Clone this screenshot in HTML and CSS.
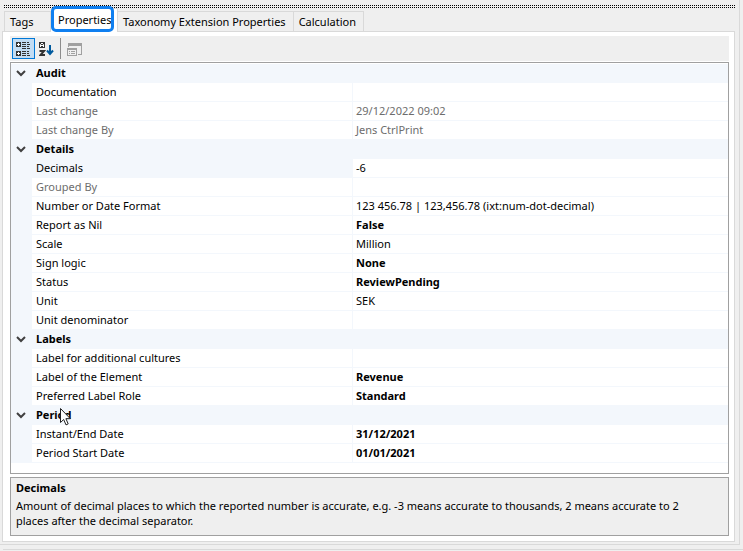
FILE: index.html
```
<!DOCTYPE html>
<html lang="en">
<head>
    <meta charset="utf-8">
    <meta name="viewport" content="width=device-width, initial-scale=1">
    <title>Properties</title>
    <link rel="stylesheet" href="styles.css">
</head>
<body>

    <main class="dock">
        <div class="grip"></div>

        <div class="tabs" role="tablist">
            <button class="tab" role="tab">Tags</button>
            <button class="tab active" role="tab" aria-selected="true">Properties</button>
            <button class="tab" role="tab">Taxonomy Extension Properties</button>
            <button class="tab" role="tab">Calculation</button>
        </div>

        <section class="panel" role="tabpanel">

            <div class="toolbar">
                <button class="tool pressed" aria-label="Categorized">
                    <svg width="15" height="16" viewBox="0 0 15 16" shape-rendering="crispEdges">
                        <path fill="#333" d="M0 1h5v5H0zM0 10h5v5H0zM6 1h4v1H6zM11 1h2v1h-2zM6 3h4v1H6zM11 3h3v1h-3zM6 5h4v1H6zM11 5h2v1h-2zM6 7h4v1H6zM11 7h3v1h-3zM6 10h4v1H6zM11 10h2v1h-2zM6 12h4v1H6zM11 12h2v1h-2zM6 14h4v1H6zM11 14h3v1h-3z"/>
                        <path fill="#fff" d="M2 2h1v1h1v1H3v1H2V4H1V3h1zM2 11h1v1h1v1H3v1H2v-1H1v-1h1z"/>
                    </svg>
                </button>
                <button class="tool" aria-label="Alphabetical">
                    <svg width="15" height="16" viewBox="0 0 15 16">
                        <path fill="#333" d="M0 1h6v6H0z"/>
                        <path fill="none" stroke="#fff" d="M1.500 6V3.500L3 2l1.500 1.500V6M2 4.500h2"/>
                        <path fill="none" stroke="#333" stroke-width="2" d="M.5 10h4.500L1.500 14h4.500"/>
                        <path fill="none" stroke="#005a9e" stroke-width="2" d="M11 4v9M8 9.500l3 3.500 3-3.500"/>
                    </svg>
                </button>
                <span class="separator"></span>
                <button class="tool" aria-label="Property Pages" disabled>
                    <svg width="15" height="16" viewBox="0 0 15 16" shape-rendering="crispEdges">
                        <path fill="#a0a0a0" d="M1 2h14v3H2v1H1zM14 5h1v9h-4v-1h3zM0 7h10v8H0z"/>
                        <path fill="#efefef" d="M1 9h8v5H1z"/>
                        <path fill="#a0a0a0" d="M2 10h1v1H2zM4 10h4v1H4zM2 12h1v1H2zM4 12h4v1H4z"/>
                    </svg>
                </button>
            </div>

            <div class="grid">
                <table class="props">
                    <colgroup>
                        <col class="col-gutter">
                        <col class="col-name">
                        <col>
                    </colgroup>
                    <tbody>
                        <tr class="group">
                            <td><button class="toggle" aria-label="Collapse Audit"><svg width="10" height="7" viewBox="0 0 10 7"><path d="M1 1l4 4 4-4"/></svg></button></td>
                            <th colspan="2" scope="rowgroup">Audit</th>
                        </tr>
                        <tr><td></td><th scope="row">Documentation</th><td></td></tr>
                        <tr class="readonly"><td></td><th scope="row">Last change</th><td>29/12/2022 09:02</td></tr>
                        <tr class="readonly"><td></td><th scope="row">Last change By</th><td>Jens CtrlPrint</td></tr>
                    </tbody>
                    <tbody>
                        <tr class="group">
                            <td><button class="toggle" aria-label="Collapse Details"><svg width="10" height="7" viewBox="0 0 10 7"><path d="M1 1l4 4 4-4"/></svg></button></td>
                            <th colspan="2" scope="rowgroup">Details</th>
                        </tr>
                        <tr class="selected"><td></td><th scope="row"><label for="decimals">Decimals</label></th><td><input id="decimals" class="editor" type="text" value="-6"></td></tr>
                        <tr class="readonly"><td></td><th scope="row">Grouped By</th><td></td></tr>
                        <tr><td></td><th scope="row">Number or Date Format</th><td>123 456.78 | 123,456.78 (ixt:num-dot-decimal)</td></tr>
                        <tr class="changed"><td></td><th scope="row">Report as Nil</th><td>False</td></tr>
                        <tr><td></td><th scope="row">Scale</th><td>Million</td></tr>
                        <tr class="changed"><td></td><th scope="row">Sign logic</th><td>None</td></tr>
                        <tr class="changed"><td></td><th scope="row">Status</th><td>ReviewPending</td></tr>
                        <tr><td></td><th scope="row">Unit</th><td>SEK</td></tr>
                        <tr><td></td><th scope="row">Unit denominator</th><td></td></tr>
                    </tbody>
                    <tbody>
                        <tr class="group">
                            <td><button class="toggle" aria-label="Collapse Labels"><svg width="10" height="7" viewBox="0 0 10 7"><path d="M1 1l4 4 4-4"/></svg></button></td>
                            <th colspan="2" scope="rowgroup">Labels</th>
                        </tr>
                        <tr><td></td><th scope="row">Label for additional cultures</th><td></td></tr>
                        <tr class="changed"><td></td><th scope="row">Label of the Element</th><td>Revenue</td></tr>
                        <tr class="changed"><td></td><th scope="row">Preferred Label Role</th><td>Standard</td></tr>
                    </tbody>
                    <tbody>
                        <tr class="group">
                            <td><button class="toggle" aria-label="Collapse Period"><svg width="10" height="7" viewBox="0 0 10 7"><path d="M1 1l4 4 4-4"/></svg></button></td>
                            <th colspan="2" scope="rowgroup">Period
                                <svg class="cursor" width="13" height="20" viewBox="0 0 13 20"><path fill="#fff" stroke="#222" d="M1.500 1.500v14l3.200-3 2.300 5.400 2.200-1-2.300-5.200h4.400z"/></svg>
                            </th>
                        </tr>
                        <tr class="changed"><td></td><th scope="row">Instant/End Date</th><td>31/12/2021</td></tr>
                        <tr class="changed"><td></td><th scope="row">Period Start Date</th><td>01/01/2021</td></tr>
                    </tbody>
                </table>
            </div>

            <div class="help">
                <h2>Decimals</h2>
                <p>Amount of decimal places to which the reported number is accurate, e.g. -3 means accurate to thousands, 2 means accurate to 2 places after the decimal separator.</p>
            </div>

        </section>
    </main>

    <footer class="edge"></footer>

</body>
</html>
```
FILE: styles.css
```
* {
    box-sizing: border-box;
}
body {
    margin: 0;
    min-height: 100vh;
    display: flex;
    flex-direction: column;
    background: #efefef;
    color: #000;
    font: 11px/15px "Noto Sans", "Open Sans", sans-serif;
}
button, input {
    font: inherit;
    color: inherit;
    border: 0;
    padding: 0;
    margin: 0;
    background: none;
}
.dock {
    flex: 1;
    display: flex;
    flex-direction: column;
    margin-right: 3px;
    padding: 5px 4px 2px 2px;
    border-right: 1px solid #d9d9d9;
    border-bottom: 1px solid #d9d9d9;
}
/* two rows of dots, one pixel on and one off */
.grip {
    height: 3px;
    margin: 0 -1px 0 1px;
    background: conic-gradient(#000 25%, #efefef 0) 0 0 / 2px 2px;
}

/* tabs */
.tabs {
    display: flex;
    align-items: flex-end;
    height: 23px;
    padding-left: 2px;
}
.tab {
    height: 20px;
    padding: 0 7px 0 5px;
    border: 1px solid #d9d9d9;
    border-bottom: 0;
    white-space: nowrap;
}
.tab + .tab {
    border-left: 0;
}
.tab:first-child {
    width: 47px;
    text-align: left;
}
.tab.active {
    position: relative;
    z-index: 1;
    height: 24px;
    width: 67px;
    margin-bottom: -1px;
    padding: 0 6px 3px 7px;
    background: #fff;
}
.tab.active::after {
    content: "";
    position: absolute;
    inset: -3px 3px 0 0;
    border: 3px solid #0f7ff0;
    border-radius: 5px;
}

/* page under the tabs */
.panel {
    flex: 1;
    display: flex;
    flex-direction: column;
    padding: 4px 5px 5px 7px;
    border: 1px solid #d9d9d9;
    background: #fff;
}
.toolbar {
    display: flex;
    align-items: center;
    height: 25px;
    padding-left: 2px;
    margin-bottom: 1px;
    background: #efefef;
}
.tool {
    display: flex;
    align-items: center;
    justify-content: center;
    width: 23px;
    height: 21px;
}
.tool.pressed {
    border: 1px solid #0078d7;
    background: #c2dcf3;
}
.separator {
    width: 1px;
    height: 21px;
    margin: 0 2px;
    background: #8c8c8c;
}

/* property grid */
.grid {
    flex: 1;
    padding-top: 1px;
    border: 1px solid #a0a0a0;
    background: #fff;
}
.props {
    width: 100%;
    table-layout: fixed;
    border-collapse: separate;
    border-spacing: 0;
}
.col-gutter {
    width: 21px;
}
.col-name {
    width: 321px;
}
.props tr {
    height: 19px;
}
.props th,
.props td {
    height: 19px;
    padding: 0 4px 2px;
    border-bottom: 1px solid #f3f7fc;
    font-weight: normal;
    text-align: left;
    white-space: nowrap;
    overflow: hidden;
}
.props td {
    padding-left: 3px;
}
.props td:first-child {
    padding: 0 2px 2px 0;
    background: #f3f7fc;
    text-align: center;
}
.props tr:not(.group) th {
    border-right: 1px solid #f3f7fc;
}
.props .group th {
    position: relative;
    overflow: visible;
    background: #f3f7fc;
    font-weight: bold;
}
.props .selected th {
    background: #f3f7fc;
}
.props .readonly {
    color: #6d6d6d;
}
.props .changed td {
    font-weight: bold;
}
.toggle {
    display: block;
    height: 16px;
    margin: 0 auto;
}
.toggle path {
    fill: none;
    stroke: #404040;
    stroke-width: 2;
}
.editor {
    display: block;
    width: 100%;
    height: 16px;
    outline: 0;
}
.cursor {
    position: absolute;
    left: 27px;
    top: 1px;
    z-index: 2;
}

/* description of the selected property */
.help {
    min-height: 59px;
    margin-top: 3px;
    padding: 2px 16px 2px 5px;
    border: 1px solid #a0a0a0;
    background: #efefef;
}
.help h2 {
    margin: 0 0 3px;
    font-size: 11px;
    line-height: 15px;
}
.help p {
    margin: 0;
}
.edge {
    height: 2px;
    margin: 4px 0 0 3px;
    border-top: 1px solid #d9d9d9;
}
```
